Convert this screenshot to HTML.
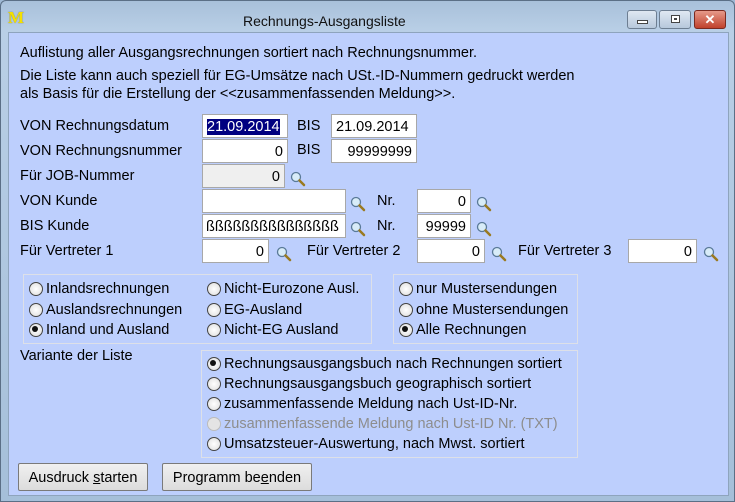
<!DOCTYPE html>
<html><head><meta charset="utf-8"><style>
*{margin:0;padding:0;box-sizing:border-box}
body{width:735px;height:502px;overflow:hidden;font-family:"Liberation Sans",sans-serif;font-size:14.5px;line-height:19px;color:#000;background:#9fb9d5}
.win{position:absolute;left:0;top:0;width:735px;height:502px;background:linear-gradient(#a8c0da,#b9cfe6 30px,#a5bfd9);border:1px solid #5b6f86;border-radius:6px 6px 0 0}
.client{position:absolute;left:7px;top:31px;width:721px;height:464px;background:#bdcffd;border:1px solid #8ea4bd}
.a{position:absolute;white-space:nowrap;padding-top:2px}
.in{position:absolute;height:24px;background:#fff;border:1px solid #a8a8a8;padding:2px 4px 0;line-height:20px;text-align:right;font-size:14.5px}
.mag{position:absolute;width:16px;height:16px}
.grp{position:absolute;border:1px solid #dde0e8}
.r{position:absolute;white-space:nowrap;padding-left:17px;padding-top:1px}
.r:before{content:"";position:absolute;left:0;top:3px;width:12px;height:12px;border:1px solid #444;border-radius:50%;background:radial-gradient(#fff,#dcdcdc)}
.r.on:after{content:"";position:absolute;left:3px;top:6px;width:6px;height:6px;border-radius:50%;background:#111}
.r.dis{color:#8d8d8d}.r.dis:before{border-color:#bbb;background:#e4e4e4}
.btn{position:absolute;height:28px;border:1px solid #7a7a7a;background:linear-gradient(#f0f0f0,#dcdcdc);text-align:center;line-height:28px;border-radius:2px}
.tb{position:absolute;top:9px;height:19px;border:1px solid #6d7e92;border-radius:3px;background:linear-gradient(#dfe8f2,#b7c8dc)}
</style></head><body>
<div class="win">
<div class="a" style="left:7px;top:5px;color:#f4e000;font-weight:bold;font-family:'Liberation Serif',serif;font-size:17px;text-shadow:0 0 1px #665">M</div>
<div class="a" style="left:242px;top:9px;font-size:14px;color:#111">Rechnungs-Ausgangsliste</div>
<div class="tb" style="left:626px;width:30px"><div style="position:absolute;left:9px;top:9px;width:11px;height:4px;border:1px solid #444;background:#fff"></div></div>
<div class="tb" style="left:658px;width:32px"><div style="position:absolute;left:11px;top:4px;width:9px;height:8px;border:1px solid #444;background:#fff"><div style="margin:2px;width:3px;height:2px;border:1px solid #444"></div></div></div>
<div class="tb" style="left:693px;width:32px;background:linear-gradient(#e69a8a,#c0412c);border-color:#7a2a20;color:#fff;text-align:center;font-weight:bold;font-size:13px;line-height:17px">✕</div>
<div class="client"></div>
</div>
<svg width="0" height="0" style="position:absolute"><defs><g id="m"><circle cx="6" cy="6" r="4.5" fill="#d8ecf8" stroke="#5a7a98" stroke-width="1.3"/><path d="M9.5 9.5 L14 14" stroke="#9a7a20" stroke-width="2.5" stroke-linecap="round"/></g></defs></svg>
<div class="a" style="left:20px;top:42px">Auflistung aller Ausgangsrechnungen sortiert nach Rechnungsnummer.</div>
<div class="a" style="left:20px;top:65px">Die Liste kann auch speziell für EG-Umsätze nach USt.-ID-Nummern gedruckt werden</div>
<div class="a" style="left:20px;top:83px">als Basis für die Erstellung der &lt;&lt;zusammenfassenden Meldung&gt;&gt;.</div>

<div class="a" style="left:20px;top:115px">VON Rechnungsdatum</div>
<div class="in" style="left:202px;top:114px;width:86px;text-align:left"><span style="background:#000080;color:#fff">21.09.2014</span></div>
<div class="a" style="left:297px;top:115px">BIS</div>
<div class="in" style="left:331px;top:114px;width:86px;text-align:left">21.09.2014</div>

<div class="a" style="left:20px;top:140px">VON Rechnungsnummer</div>
<div class="in" style="left:202px;top:139px;width:86px">0</div>
<div class="a" style="left:297px;top:139px">BIS</div>
<div class="in" style="left:331px;top:139px;width:86px">99999999</div>

<div class="a" style="left:20px;top:165px">Für JOB-Nummer</div>
<div class="in" style="left:202px;top:164px;width:83px;background:#efefef">0</div>
<svg class="mag" style="left:290px;top:171px"><use href="#m"/></svg>

<div class="a" style="left:20px;top:190px">VON Kunde</div>
<div class="in" style="left:202px;top:189px;width:144px"></div>
<svg class="mag" style="left:350px;top:196px"><use href="#m"/></svg>
<div class="a" style="left:377px;top:190px">Nr.</div>
<div class="in" style="left:417px;top:189px;width:54px">0</div>
<svg class="mag" style="left:476px;top:196px"><use href="#m"/></svg>

<div class="a" style="left:20px;top:215px">BIS Kunde</div>
<div class="in" style="left:202px;top:214px;width:144px;text-align:left;padding-left:3px">ßßßßßßßßßßßßßßß</div>
<svg class="mag" style="left:350px;top:221px"><use href="#m"/></svg>
<div class="a" style="left:377px;top:215px">Nr.</div>
<div class="in" style="left:417px;top:214px;width:54px">99999</div>
<svg class="mag" style="left:476px;top:221px"><use href="#m"/></svg>

<div class="a" style="left:20px;top:240px">Für Vertreter 1</div>
<div class="in" style="left:202px;top:239px;width:67px">0</div>
<svg class="mag" style="left:276px;top:246px"><use href="#m"/></svg>
<div class="a" style="left:307px;top:240px">Für Vertreter 2</div>
<div class="in" style="left:417px;top:239px;width:68px">0</div>
<svg class="mag" style="left:491px;top:246px"><use href="#m"/></svg>
<div class="a" style="left:518px;top:240px">Für Vertreter 3</div>
<div class="in" style="left:628px;top:239px;width:69px">0</div>
<svg class="mag" style="left:703px;top:246px"><use href="#m"/></svg>

<div class="grp" style="left:23px;top:274px;width:349px;height:70px"></div>
<div class="r" style="left:29px;top:279px">Inlandsrechnungen</div>
<div class="r" style="left:29px;top:300px">Auslandsrechnungen</div>
<div class="r on" style="left:29px;top:320px">Inland und Ausland</div>
<div class="r" style="left:207px;top:279px">Nicht-Eurozone Ausl.</div>
<div class="r" style="left:207px;top:300px">EG-Ausland</div>
<div class="r" style="left:207px;top:320px">Nicht-EG Ausland</div>

<div class="grp" style="left:393px;top:274px;width:185px;height:70px"></div>
<div class="r" style="left:399px;top:279px">nur Mustersendungen</div>
<div class="r" style="left:399px;top:300px">ohne Mustersendungen</div>
<div class="r on" style="left:399px;top:320px">Alle Rechnungen</div>

<div class="a" style="left:20px;top:345px">Variante der Liste</div>
<div class="grp" style="left:201px;top:350px;width:377px;height:108px"></div>
<div class="r on" style="left:207px;top:354px">Rechnungsausgangsbuch nach Rechnungen sortiert</div>
<div class="r" style="left:207px;top:374px">Rechnungsausgangsbuch geographisch sortiert</div>
<div class="r" style="left:207px;top:394px">zusammenfassende Meldung nach Ust-ID-Nr.</div>
<div class="r dis" style="left:207px;top:414px">zusammenfassende Meldung nach Ust-ID Nr. (TXT)</div>
<div class="r" style="left:207px;top:434px">Umsatzsteuer-Auswertung, nach Mwst. sortiert</div>

<div class="btn" style="left:18px;top:463px;width:130px">Ausdruck <u>s</u>tarten</div>
<div class="btn" style="left:162px;top:463px;width:150px">Programm be<u>e</u>nden</div>
</body></html>
